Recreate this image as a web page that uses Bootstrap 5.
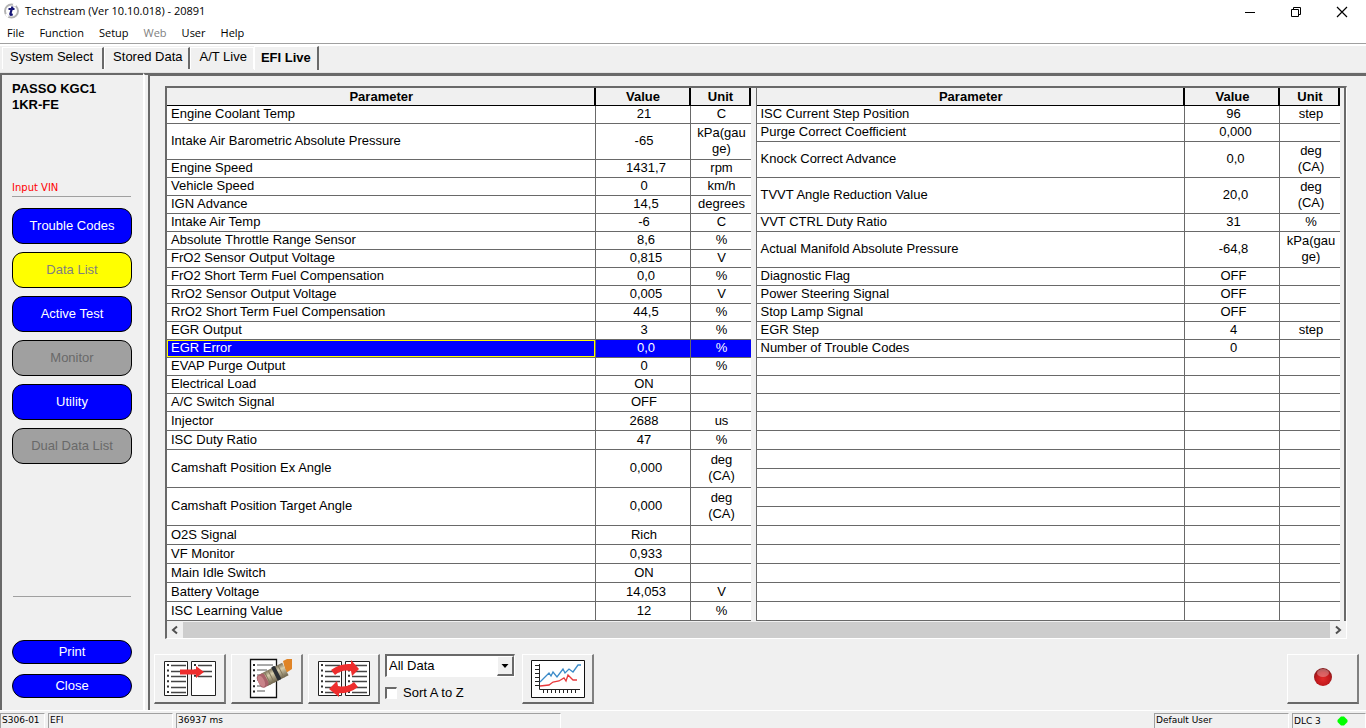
<!DOCTYPE html>
<html lang="en">
<head>
<meta charset="utf-8">
<meta name="viewport" content="width=device-width, initial-scale=1">
<title>Techstream (Ver 10.10.018) - 20891</title>
<link rel="stylesheet" href="https://cdn.jsdelivr.net/npm/bootstrap@5.3.0/dist/css/bootstrap.min.css">
<style>
body{background:#f0f0f0;color:#000;font:13px/16px "Liberation Sans",Arial,sans-serif}
.titlebar,.menubar{font:11px/16px "Open Sans","Segoe UI",sans-serif;background:#fff}
.titlebar{height:22px}
.titlebar .wbtn{width:46px;height:22px;padding:0 2px 0 0;border:0;background:none;line-height:1}
.menubar{height:22px;border-bottom:1px solid #a0a0a0;padding:3px 0 0 7px;gap:15px}
.menubar a{color:#000;text-decoration:none}
.menubar a.off{color:#808080}
.tabstrip{height:30px;border-top:2px solid #fff;border-bottom:2px solid #e3e3e3;padding-left:2px}
.tabstrip a{color:#000;text-decoration:none;height:22px;margin-top:1px;padding:1px 6px 0 8px;border:1px solid #fff;border-right:2px solid #696969;border-bottom:0}
.tabstrip a:first-child{padding:1px 9px 0 7px}
.tabstrip a.flat{border-right:1px solid #fff}
.tabstrip a.active{font-weight:bold;height:24px;margin-top:0;padding:3px 6px 0 6px}
.side{width:143px;border-left:2px solid #696969;border-top:2px solid #696969;margin-top:-1px;padding:6px 10px 12px 10px}
.split{width:5px;border-left:2px solid #fff;border-top:2px solid #696969;margin-top:-1px}
.pane{border-left:2px solid #696969;border-top:3px solid #696969;margin-top:-1px;min-width:0}
.vin{font:10px/14px "DejaVu Sans",sans-serif;color:#f00;margin-top:68px;border-bottom:1px solid #a0a0a0;padding-bottom:1px;width:119px}
.cmds{padding-top:11px}
.side .cmd{width:120px;height:36px;border:1px solid #000;border-radius:11px;background:#00f;color:#fff;font-size:13px;line-height:16px;padding:0}
.side .cmd.low{height:24px;border-radius:12px;margin-top:10px}
.side .cmd.sel{background:#ff0;color:#808080;opacity:1}
.side .cmd.dim{background:#a0a0a0;color:#696969;opacity:1}
.rule{height:1px;background:#a0a0a0;width:118px;margin:0 0 43px 1px}
.gridbox{margin:10px 19px 0 15px;border:2px solid #696969;border-right:1px solid #fff;border-bottom:1px solid #fff}
.tables{border-right:2px solid #696969;padding-right:4px}
.pid{table-layout:fixed;border-collapse:separate;border-spacing:0;width:100%;background:#fff}
.pid .v{width:95px}.pid .u{width:60px}
.pid th{height:18px;line-height:16px;padding:1px 0 0 2px;background:#f0f0f0;text-align:center;border-right:2px solid #000;border-bottom:1px solid #000}
.pid td{height:18px;padding:0 0 1px 3px;line-height:16px;text-align:center;border-right:1px solid #696969;border-bottom:1px solid #696969}
.pid td:first-child{text-align:left;padding-left:4px}
.pid td:last-child{border-right:0;padding-left:2px}
.pid .h36 td{height:36px}.pid .h19 td{height:19px}.pid .h38 td{height:38px}
.pid .dec{padding-left:7px}
.pid .hot td{background:#00f;color:#fff}
.pid .hot td:first-child{box-shadow:inset 0 0 0 1px #ff0}
.half{min-width:0;flex:1 1 0}
.half.second{border-left:1px solid #696969;margin-left:5px}
.hscroll{height:17px;color:#505050}
.hscroll button{width:16px;height:16px;padding:0;border:0;background:none;line-height:0}
.thumb{background:#cdcdcd;height:16px}
.tool{width:72px;height:50px;padding:0;background:#f0f0f0;border:1px solid #fff;border-right:2px solid #808080;border-bottom:2px solid #696969;line-height:0}
.toolrow{padding:15px 7px 6px 4px;gap:5px}
.picker{width:132px}
.filter{width:130px;height:23px;border:2px solid #696969;border-right-color:#fff;border-bottom-color:#fff;border-right-width:1px;border-bottom-width:1px;background:#fff;position:relative}
.filter select{appearance:none;border:0;background:#fff;width:100%;height:20px;padding:0 0 0 2px;color:#000;outline:0}
.arrow{position:absolute;right:0;top:0;width:17px;height:20px;background:#f0f0f0;border:1px solid #fff;border-right:2px solid #696969;border-bottom:2px solid #696969;pointer-events:none;line-height:0}
.sortbox{gap:6px}
.sortbox input{appearance:none;width:12px;height:12px;margin:0;background:#fff;border:1px solid #fff;border-left:2px solid #696969;border-top:2px solid #696969}
.status{border-top:1px solid #fff;height:18px;font:9px/13px "DejaVu Sans",sans-serif;padding-top:2px;gap:3px}
.status>div{border-left:1px solid #a0a0a0;border-top:1px solid #a0a0a0;border-right:1px solid #fff;height:15px;padding-left:1px;white-space:nowrap}
.s1{width:45px}.s2{width:125px}.s3{width:385px}.s4{width:135px;margin-left:auto}.s5{width:74px}
</style>
</head>
<body class="d-flex flex-column min-vh-100">
<header>
  <div class="titlebar d-flex align-items-center">
    <svg class="ms-1" width="17" height="18" viewBox="0 0 17 18"><circle cx="7.500" cy="9" r="6.500" fill="#fff" stroke="#b4b4b4" stroke-width="2"/><path d="M9 2.500l3 1M4 15l-2-3" stroke="#fff" stroke-width="2"/><path d="M8.500 4.500L6.300 12q-.2 1.600 2.400.3M4.500 7h6" fill="none" stroke="#151575" stroke-width="2.200"/></svg>
    <span class="ps-1">Techstream (Ver 10.10.018) - 20891</span>
    <div class="ms-auto d-flex">
      <button class="wbtn" aria-label="Minimize"><svg width="12" height="12"><path d="M1 6.500h10" stroke="#000"/></svg></button>
      <button class="wbtn" aria-label="Restore"><svg width="12" height="12" fill="none" stroke="#000"><path d="M1.500 3.500h7v7h-7zM3.500 3.500v-2h7v7h-2"/></svg></button>
      <button class="wbtn" aria-label="Close"><svg width="12" height="12"><path d="M1 1l10 10M11 1L1 11" stroke="#000" stroke-width="1.200"/></svg></button>
    </div>
  </div>
  <nav class="menubar d-flex">
    <a href="#">File</a><a href="#">Function</a><a href="#">Setup</a><a class="off" href="#">Web</a><a href="#">User</a><a href="#">Help</a>
  </nav>
  <nav class="tabstrip d-flex">
    <a href="#">System Select</a><a href="#">Stored Data</a><a href="#" class="flat">A/T Live</a><a href="#" class="active">EFI Live</a>
  </nav>
</header>
<div class="d-flex flex-grow-1">
  <aside class="side d-flex flex-column flex-shrink-0">
    <div class="fw-bold">PASSO KGC1<br>1KR-FE</div>
    <div class="vin">Input VIN</div>
    <div class="cmds d-flex flex-column gap-2">
      <button class="cmd">Trouble Codes</button>
      <button class="cmd sel" disabled>Data List</button>
      <button class="cmd">Active Test</button>
      <button class="cmd dim" disabled>Monitor</button>
      <button class="cmd">Utility</button>
      <button class="cmd dim" disabled>Dual Data List</button>
    </div>
    <div class="mt-auto">
      <div class="rule"></div>
      <button class="cmd low d-block">Print</button>
      <button class="cmd low d-block">Close</button>
    </div>
  </aside>
  <div class="split flex-shrink-0"></div>
  <main class="pane flex-grow-1 d-flex flex-column">
    <div class="gridbox">
      <div class="tables d-flex">
        <div class="half">
          <table class="pid">
            <thead><tr><th>Parameter</th><th class="v">Value</th><th class="u">Unit</th></tr></thead>
            <tbody>
            <tr><td>Engine Coolant Temp</td><td>21</td><td>C</td></tr>
            <tr class="h36"><td>Intake Air Barometric Absolute Pressure</td><td>-65</td><td>kPa(gau<br>ge)</td></tr>
            <tr><td>Engine Speed</td><td class="dec">1431,7</td><td>rpm</td></tr>
            <tr><td>Vehicle Speed</td><td>0</td><td>km/h</td></tr>
            <tr><td>IGN Advance</td><td class="dec">14,5</td><td>degrees</td></tr>
            <tr><td>Intake Air Temp</td><td>-6</td><td>C</td></tr>
            <tr><td>Absolute Throttle Range Sensor</td><td class="dec">8,6</td><td>%</td></tr>
            <tr><td>FrO2 Sensor Output Voltage</td><td class="dec">0,815</td><td>V</td></tr>
            <tr><td>FrO2 Short Term Fuel Compensation</td><td class="dec">0,0</td><td>%</td></tr>
            <tr><td>RrO2 Sensor Output Voltage</td><td class="dec">0,005</td><td>V</td></tr>
            <tr><td>RrO2 Short Term Fuel Compensation</td><td class="dec">44,5</td><td>%</td></tr>
            <tr><td>EGR Output</td><td>3</td><td>%</td></tr>
            <tr class="hot"><td>EGR Error</td><td class="dec">0,0</td><td>%</td></tr>
            <tr><td>EVAP Purge Output</td><td>0</td><td>%</td></tr>
            <tr><td>Electrical Load</td><td>ON</td><td></td></tr>
            <tr><td>A/C Switch Signal</td><td>OFF</td><td></td></tr>
            <tr class="h19"><td>Injector</td><td>2688</td><td>us</td></tr>
            <tr class="h19"><td>ISC Duty Ratio</td><td>47</td><td>%</td></tr>
            <tr class="h38"><td>Camshaft Position Ex Angle</td><td class="dec">0,000</td><td>deg<br>(CA)</td></tr>
            <tr class="h38"><td>Camshaft Position Target Angle</td><td class="dec">0,000</td><td>deg<br>(CA)</td></tr>
            <tr class="h19"><td>O2S Signal</td><td>Rich</td><td></td></tr>
            <tr class="h19"><td>VF Monitor</td><td class="dec">0,933</td><td></td></tr>
            <tr class="h19"><td>Main Idle Switch</td><td>ON</td><td></td></tr>
            <tr class="h19"><td>Battery Voltage</td><td class="dec">14,053</td><td>V</td></tr>
            <tr class="h19"><td>ISC Learning Value</td><td>12</td><td>%</td></tr>
            </tbody>
          </table>
        </div>
        <div class="half second">
          <table class="pid">
            <thead><tr><th>Parameter</th><th class="v">Value</th><th class="u">Unit</th></tr></thead>
            <tbody>
            <tr><td>ISC Current Step Position</td><td>96</td><td>step</td></tr>
            <tr><td>Purge Correct Coefficient</td><td class="dec">0,000</td><td></td></tr>
            <tr class="h36"><td>Knock Correct Advance</td><td class="dec">0,0</td><td>deg<br>(CA)</td></tr>
            <tr class="h36"><td>TVVT Angle Reduction Value</td><td class="dec">20,0</td><td>deg<br>(CA)</td></tr>
            <tr><td>VVT CTRL Duty Ratio</td><td>31</td><td>%</td></tr>
            <tr class="h36"><td>Actual Manifold Absolute Pressure</td><td>-64,8</td><td>kPa(gau<br>ge)</td></tr>
            <tr><td>Diagnostic Flag</td><td>OFF</td><td></td></tr>
            <tr><td>Power Steering Signal</td><td>OFF</td><td></td></tr>
            <tr><td>Stop Lamp Signal</td><td>OFF</td><td></td></tr>
            <tr><td>EGR Step</td><td>4</td><td>step</td></tr>
            <tr><td>Number of Trouble Codes</td><td>0</td><td></td></tr>
            <tr><td></td><td></td><td></td></tr>
            <tr><td></td><td></td><td></td></tr>
            <tr><td></td><td></td><td></td></tr>
            <tr class="h19"><td></td><td></td><td></td></tr>
            <tr class="h19"><td></td><td></td><td></td></tr>
            <tr class="h19"><td></td><td></td><td></td></tr>
            <tr class="h19"><td></td><td></td><td></td></tr>
            <tr class="h19"><td></td><td></td><td></td></tr>
            <tr class="h19"><td></td><td></td><td></td></tr>
            <tr class="h19"><td></td><td></td><td></td></tr>
            <tr class="h19"><td></td><td></td><td></td></tr>
            <tr class="h19"><td></td><td></td><td></td></tr>
            <tr class="h19"><td></td><td></td><td></td></tr>
            <tr class="h19"><td></td><td></td><td></td></tr>
            </tbody>
          </table>
        </div>
      </div>
      <div class="hscroll d-flex align-items-center">
        <button aria-label="Scroll left"><svg width="10" height="10"><path d="M7 1.500L3 5l4 3.500" fill="none" stroke="#505050" stroke-width="2"/></svg></button>
        <div class="thumb flex-grow-1"></div>
        <button aria-label="Scroll right"><svg width="10" height="10"><path d="M3 1.500L7 5 3 8.500" fill="none" stroke="#505050" stroke-width="2"/></svg></button>
      </div>
    </div>
    <div class="toolrow d-flex">
      <button class="tool" aria-label="Move to list">
        <svg width="54" height="38" viewBox="0 0 54 38"><g fill="#fff" stroke="#222"><path d="M1.500 1.500h23v34h-23zM28.500 1.500h24v34h-24z"/></g><path d="M8 5.500h15M8 11.500h15M8 16.500h15M8 21.500h15M8 27.500h15M8 32.500h15M35 5.500h14M35 11.500h14M35 16.500h14" stroke="#444" stroke-width="1.300"/><path d="M5 4v30M32 4v14" stroke="#333" stroke-width="2" stroke-dasharray="2 3.400"/><path d="M17 9.500h16V6l8 6-8 6v-3.500H17z" fill="#ee2c2c"/></svg>
      </button>
      <button class="tool" aria-label="Clear list">
        <svg width="54" height="42" viewBox="0 0 54 42"><defs><linearGradient id="tin" x1="0" y1="0" x2="0" y2="1"><stop offset="0" stop-color="#7d735c"/><stop offset=".35" stop-color="#d8cfae"/><stop offset="1" stop-color="#6b614b"/></linearGradient></defs><path d="M10.500 1.500h26v38h-26z" fill="#fff" stroke="#111" stroke-width="1.300"/><path d="M17 7h16M17 12h10M17 17h6M17 22h5M17 28h6M17 33h8" stroke="#555" stroke-width="1.200"/><path d="M14 6v29" stroke="#222" stroke-width="2" stroke-dasharray="2 3.300"/><path d="M43 3l4-2h5v10l-6 4z" fill="#e08426"/><g transform="translate(24 22) rotate(-27)"><rect x="0" y="-7" width="24" height="14" fill="url(#tin)"/><path d="M4-6v13M8-6v13M19-6v13" stroke="#85795d"/><rect x="12" y="-8" width="4" height="15" rx="1" fill="#2c3034"/><rect x="-6" y="-7" width="9" height="14" rx="4" fill="#a9626a"/><ellipse cx="-3" cy="0" rx="3" ry="6" fill="#c98389"/></g></svg>
      </button>
      <button class="tool" aria-label="Swap lists">
        <svg width="54" height="42" viewBox="0 -2 54 42"><g fill="#fff" stroke="#222"><path d="M1.500 1.500h23v34h-23zM28.500 1.500h24v34h-24z"/></g><path d="M8 5.500h15M8 11.500h15M8 16.500h15M8 21.500h15M8 27.500h15M8 32.500h15M35 5.500h15M35 11.500h15M35 16.500h15M35 21.500h15M35 27.500h15M35 32.500h15" stroke="#444" stroke-width="1.300"/><path d="M5 4v30M32 4v30" stroke="#333" stroke-width="2" stroke-dasharray="2 3.400"/><path d="M14 10q9-7 20-6V0l8 9-7 7-1-5q-9-2-16 4zM41 27q-9 7-19 6v4l-10-8 8-8 1 5q9 2 16-4z" fill="#ee2c2c"/></svg>
      </button>
      <div class="picker">
        <div class="filter"><select id="filter" aria-label="Data filter"><option>All Data</option></select><span class="arrow"><svg width="14" height="17"><path d="M3.500 7h7L7 11z"/></svg></span></div>
        <div class="sortbox d-flex align-items-center pt-2"><input type="checkbox" id="sort"><label for="sort">Sort A to Z</label></div>
      </div>
      <button class="tool" aria-label="Graph">
        <svg width="54" height="38" viewBox="0 0 54 38"><path d="M.5.500h53v37H.5z" fill="#fff" stroke="#111"/><path d="M8.500 4v25.500H49M4 5.500h4M4 9.500h4M4 13.500h4M4 17.500h4M4 21.500h4M4 25.500h4M12.500 30v3M16.500 30v3M20.500 30v3M24.500 30v3M28.500 30v3M32.500 30v3M36.500 30v3M40.500 30v3M44.500 30v3" fill="none" stroke="#222"/><path d="M9 22l9-9 2 3 2-4 4 5 6-8 2 4 4-4 4 3 5-7h3" fill="none" stroke="#3a8ac8" stroke-width="1.300"/><path d="M9 26l9-1 4-3 6-1 5-3 2 3 2-6 5 5h4" fill="none" stroke="#e8393c" stroke-width="1.300"/></svg>
      </button>
      <button class="tool ms-auto" aria-label="Record">
        <svg width="20" height="22" viewBox="0 1 20 22"><defs><radialGradient id="rec" cx=".5" cy=".6" r=".6"><stop offset="0" stop-color="#e22a2a"/><stop offset=".6" stop-color="#c31a1e"/><stop offset="1" stop-color="#7d1a1c"/></radialGradient></defs><circle cx="10" cy="10" r="9" fill="url(#rec)"/><ellipse cx="10" cy="6" rx="6" ry="4" fill="#fff" opacity=".3"/></svg>
      </button>
    </div>
  </main>
</div>
<footer class="status d-flex">
  <div class="s1">S306-01</div><div class="s2">EFI</div><div class="s3">36937 ms</div><div class="s4">Default User</div><div class="s5 d-flex align-items-center">DLC 3<svg class="ms-3" width="12" height="12"><path d="M4 1.500h3L10.500 5v2L7 10.500H4L.5 7V5z" fill="#0f0"/></svg></div>
</footer>
<script src="https://cdn.jsdelivr.net/npm/bootstrap@5.3.0/dist/js/bootstrap.bundle.min.js"></script>
</body>
</html>
